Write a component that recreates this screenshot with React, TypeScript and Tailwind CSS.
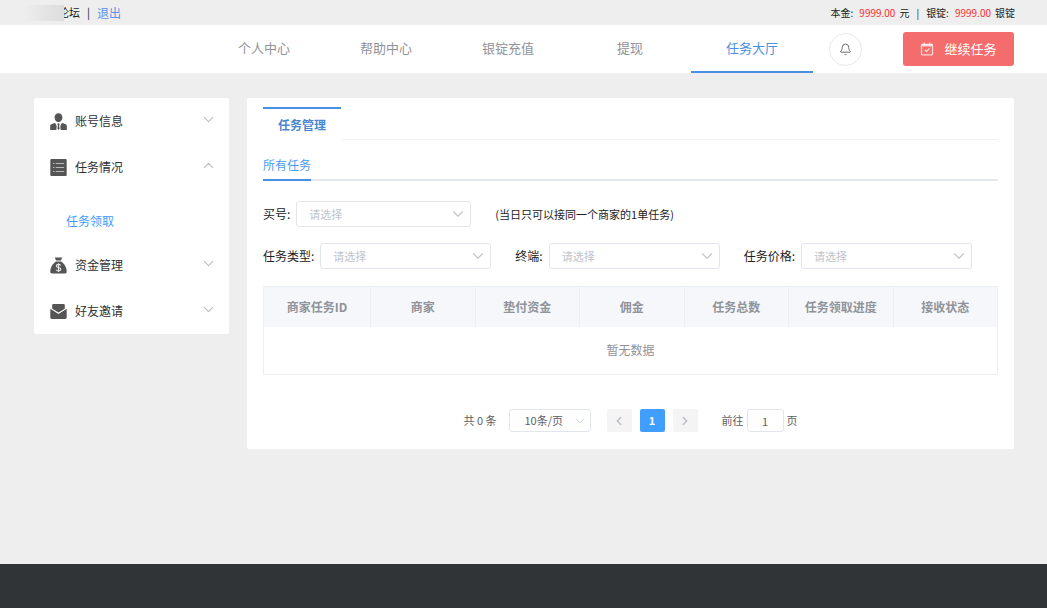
import React, { useState } from 'react';
import { Bell, ChevronDown, ChevronLeft, ChevronRight, ChevronUp } from 'lucide-react';

const navItems = ['个人中心', '帮助中心', '银锭充值', '提现', '任务大厅'];

const columns = ['商家任务ID', '商家', '垫付资金', '佣金', '任务总数', '任务领取进度', '接收状态'];

function UserIcon() {
  return (
    <svg viewBox="0 0 17 17" className="h-[17px] w-[17px]" fill="#555">
      <path d="M8.5 0.2c2.4 0 3.9 1.7 3.9 4 0 2.500-1.700 4.900-3.900 4.900s-3.900-2.400-3.900-4.900c0-2.300 1.500-4 3.900-4z" />
      <path d="M5 9.800 0.900 11.500c-0.500 0.300-0.700 0.700-0.700 1.300V17h6.100l0.400-4z" />
      <path d="M12 9.800l4.100 1.700c0.500 0.300 0.700 0.700 0.700 1.300V17h-6.100l-0.400-4z" />
      <path d="M7.700 10.200h1.600l0.300 1.300-0.500 0.900 0.500 3.400L8.500 17l-1.100-1.200 0.500-3.400-0.500-0.900z" />
    </svg>
  );
}

function ListIcon() {
  return (
    <svg viewBox="0 0 17 17" className="h-[17px] w-[17px]">
      <rect x="0.300" y="0" width="16.400" height="17" rx="1" fill="#555" />
      <g stroke="#b8b8b8" strokeWidth="1">
        <path d="M3 4.500h1.500M5.800 4.500H14M3 8.500h1.500M5.800 8.500H14M3 12.500h1.500M5.800 12.500H14" />
      </g>
    </svg>
  );
}

function MoneyIcon() {
  return (
    <svg viewBox="0 0 17 17" className="h-[17px] w-[17px]">
      <path d="M4.700 0.500h7.600l-1.500 3H6.200z" fill="#555" />
      <path d="M6 4.600h5c3 2 5.600 5.400 5.700 10 0 1.200-0.500 1.900-1.600 1.900H1.900c-1.100 0-1.600-0.700-1.600-1.900C0.400 10 3 6.600 6 4.600z" fill="#555" />
      <path
        d="M10.700 8.500C10.200 7.700 9.500 7.400 8.500 7.400c-1.200 0-2.100 0.600-2.100 1.600 0 2.300 4.400 1 4.400 3.300 0 1-1 1.600-2.300 1.600-1.100 0-2-0.400-2.400-1.300M8.500 6.200v8.900"
        fill="none"
        stroke="#e8e8e8"
        strokeWidth="1.100"
      />
    </svg>
  );
}

function MailIcon() {
  return (
    <svg viewBox="0 0 17 17" className="h-[17px] w-[17px]" fill="#555">
      <path d="M3.500 1h10c0.800 0 1.300 0.500 1.300 1.300v3.500L8.500 9.600 2.200 5.800V2.300C2.200 1.500 2.700 1 3.500 1z" />
      <path d="M0.300 5.800l8.200 5.300 8.200-5.300v8.800c0 0.900-0.500 1.400-1.400 1.400H1.700c-0.900 0-1.400-0.500-1.400-1.400z" />
    </svg>
  );
}

function TaskIcon() {
  return (
    <svg viewBox="0 0 14 14" className="h-3.5 w-3.5" fill="none" stroke="#fff" strokeOpacity="0.75" strokeWidth="1.300">
      <rect x="1.500" y="2.300" width="11" height="10.500" rx="0.500" />
      <path d="M2 3.400h10" strokeWidth="2" />
      <path d="M4.300 0.600v2.800M9.700 0.600v2.800M4.800 7.800l1.700 1.700 2.900-3" />
    </svg>
  );
}

interface SelectFieldProps {
  id: string;
  label: string;
  widthClass: string;
}

function SelectField({ id, label, widthClass }: SelectFieldProps) {
  return (
    <div className="flex items-center gap-1.5">
      <label htmlFor={id} className="text-xs text-[#222]">
        {label}
      </label>
      <div className={`relative ${widthClass}`}>
        <select
          id={id}
          className="block h-[26px] w-full appearance-none rounded-[3px] border border-[#e2e5eb] bg-white pr-6 pl-3 text-[11px] text-[#c0c4cc] outline-none"
        >
          <option>请选择</option>
        </select>
        <ChevronDown
          size={18}
          strokeWidth={1.5}
          className="pointer-events-none absolute top-1 right-1 text-[#c0c4cc]"
        />
      </div>
    </div>
  );
}

interface MenuItemProps {
  icon: React.ReactNode;
  label: string;
  open?: boolean;
  onClick?: () => void;
}

function MenuItem({ icon, label, open, onClick }: MenuItemProps) {
  const Arrow = open ? ChevronUp : ChevronDown;

  return (
    <button
      type="button"
      aria-expanded={!!open}
      onClick={onClick}
      className="flex h-[46px] w-full items-center gap-2 pr-3 pl-4 text-xs text-[#303133]"
    >
      {icon}
      <span>{label}</span>
      <Arrow size={17} strokeWidth={1.5} className="mb-1 ml-auto text-[#b8bbc0]" />
    </button>
  );
}

export default function App() {
  const [taskOpen, setTaskOpen] = useState(true);

  return (
    <div className="flex min-h-screen flex-col bg-[#eeeeee] font-['Noto_Sans_CJK_SC','Noto_Sans',sans-serif] text-[#222]">
      {/* Top bar */}
      <div className="flex h-[25px] items-center justify-between pr-8 pl-6 text-[11px]">
        <div className="flex items-center">
          <span className="z-10 -mr-1.5 h-4 w-10 bg-linear-to-r from-[#eeeeee] via-[#e4e4e4] to-[#dddddd]" />
          <span>论坛</span>
          <span className="mx-[7px]">|</span>
          <a href="#logout" className="text-xs text-[#5b93e6]">
            退出
          </a>
        </div>
        <div className="flex items-center text-[10px]">
          <span>本金:</span>
          <span className="mr-1 ml-1.5 text-[#fb2c2c]">9999.00</span>
          <span>元</span>
          <span className="mx-[7px]">|</span>
          <span>银锭:</span>
          <span className="mr-1 ml-1.5 text-[#fb2c2c]">9999.00</span>
          <span>银锭</span>
        </div>
      </div>

      {/* Header */}
      <header className="flex h-12 items-center justify-end bg-white pr-[33px]">
        <nav className="mr-4 flex h-full">
          {navItems.map((item) => (
            <a
              key={item}
              href="#nav"
              className={
                item === '任务大厅'
                  ? 'flex w-[122px] items-center justify-center border-b-2 border-[#4a90e2] text-[13px] text-[#4a90e2]'
                  : 'flex w-[122px] items-center justify-center border-b-2 border-transparent text-[13px] text-[#909399]'
              }
            >
              {item}
            </a>
          ))}
        </nav>
        <button
          type="button"
          aria-label="消息"
          className="flex h-[33px] w-[33px] items-center justify-center rounded-full border border-[#e8e8e8]"
        >
          <Bell size={13} strokeWidth={1.7} className="text-[#606266]" />
        </button>
        <button
          type="button"
          className="ml-[41px] flex h-[34px] w-[111px] items-center justify-center gap-2.5 rounded-[3px] bg-[#f56c6c] text-[13px] text-white"
        >
          <TaskIcon />
          继续任务
        </button>
      </header>

      <div className="flex grow items-start gap-[18px] pt-[25px] pr-[33px] pb-6 pl-[34px]">
        {/* Sidebar */}
        <aside className="w-[195px] shrink-0 rounded-[2px] bg-white">
          <MenuItem icon={<UserIcon />} label="账号信息" />
          <MenuItem
            icon={<ListIcon />}
            label="任务情况"
            open={taskOpen}
            onClick={() => setTaskOpen(!taskOpen)}
          />
          {taskOpen && (
            <a href="#receive" className="mt-2.5 flex h-[42px] items-center pl-8 text-xs text-[#409eff]">
              任务领取
            </a>
          )}
          <MenuItem icon={<MoneyIcon />} label="资金管理" />
          <MenuItem icon={<MailIcon />} label="好友邀请" />
        </aside>

        {/* Content */}
        <main className="min-w-0 grow rounded-[2px] bg-white px-4 pt-[9px] pb-[17px]">
          <div className="flex h-[33px]">
            <button
              type="button"
              className="w-[78px] border-t-2 border-[#4a90e2] text-xs font-bold text-[#4a86d0]"
            >
              任务管理
            </button>
            <div className="grow border-b border-[#f2f2f2]" />
          </div>

          <div className="flex h-[41px] border-b-2 border-[#e4e7ed]">
            <button
              type="button"
              className="-mb-0.5 border-b-2 border-[#4a90e2] pt-2.5 text-xs text-[#4a9bf0]"
            >
              所有任务
            </button>
          </div>

          <div className="mt-5 flex items-center gap-6">
            <SelectField id="buyer" label="买号:" widthClass="w-[175px]" />
            <p className="text-[11px]">(当日只可以接同一个商家的1单任务)</p>
          </div>

          <div className="mt-4 flex flex-wrap items-center gap-6">
            <SelectField id="type" label="任务类型:" widthClass="w-[171px]" />
            <SelectField id="terminal" label="终端:" widthClass="w-[171px]" />
            <SelectField id="price" label="任务价格:" widthClass="w-[171px]" />
          </div>

          <table className="mt-[17px] w-full table-fixed border-collapse border border-[#ebeef5] text-center">
            <thead>
              <tr className="h-10 bg-[#f5f7fa]">
                {columns.map((column) => (
                  <th
                    key={column}
                    className="border-r border-[#ebeef5] text-xs font-bold text-[#909399] first:w-[107px]"
                  >
                    {column}
                  </th>
                ))}
              </tr>
            </thead>
            <tbody>
              <tr className="h-12">
                <td colSpan={columns.length} className="text-xs text-[#909399]">
                  暂无数据
                </td>
              </tr>
            </tbody>
          </table>

          {/* Pagination */}
          <div className="mt-[34px] flex items-center justify-center text-[11px] text-[#606266]">
            <span>共 0 条</span>
            <div className="relative ml-3 w-[82px]">
              <select
                aria-label="每页条数"
                className="block h-[23px] w-full appearance-none rounded-[3px] border border-[#e2e5eb] bg-white pl-[15px] outline-none"
              >
                <option>10条/页</option>
              </select>
              <ChevronDown
                size={14}
                strokeWidth={1.5}
                className="pointer-events-none absolute top-[5px] right-1 text-[#c0c4cc]"
              />
            </div>
            <div className="ml-4 flex gap-2">
              <button
                type="button"
                disabled
                aria-label="上一页"
                className="flex h-[23px] w-[25px] items-center justify-center rounded-[2px] bg-[#f4f4f5] text-[#b4b8bf]"
              >
                <ChevronLeft size={14} />
              </button>
              <button
                type="button"
                className="h-[23px] w-[25px] rounded-[2px] bg-[#409eff] font-bold text-white"
              >
                1
              </button>
              <button
                type="button"
                disabled
                aria-label="下一页"
                className="flex h-[23px] w-[25px] items-center justify-center rounded-[2px] bg-[#f4f4f5] text-[#b4b8bf]"
              >
                <ChevronRight size={14} />
              </button>
            </div>
            <label htmlFor="page" className="ml-6">
              前往
            </label>
            <input
              id="page"
              defaultValue="1"
              className="mx-[3px] h-[23px] w-[37px] rounded-[3px] border border-[#e2e5eb] text-center outline-none"
            />
            <span>页</span>
          </div>
        </main>
      </div>

      <footer className="h-11 bg-[#303436]" />
    </div>
  );
}
